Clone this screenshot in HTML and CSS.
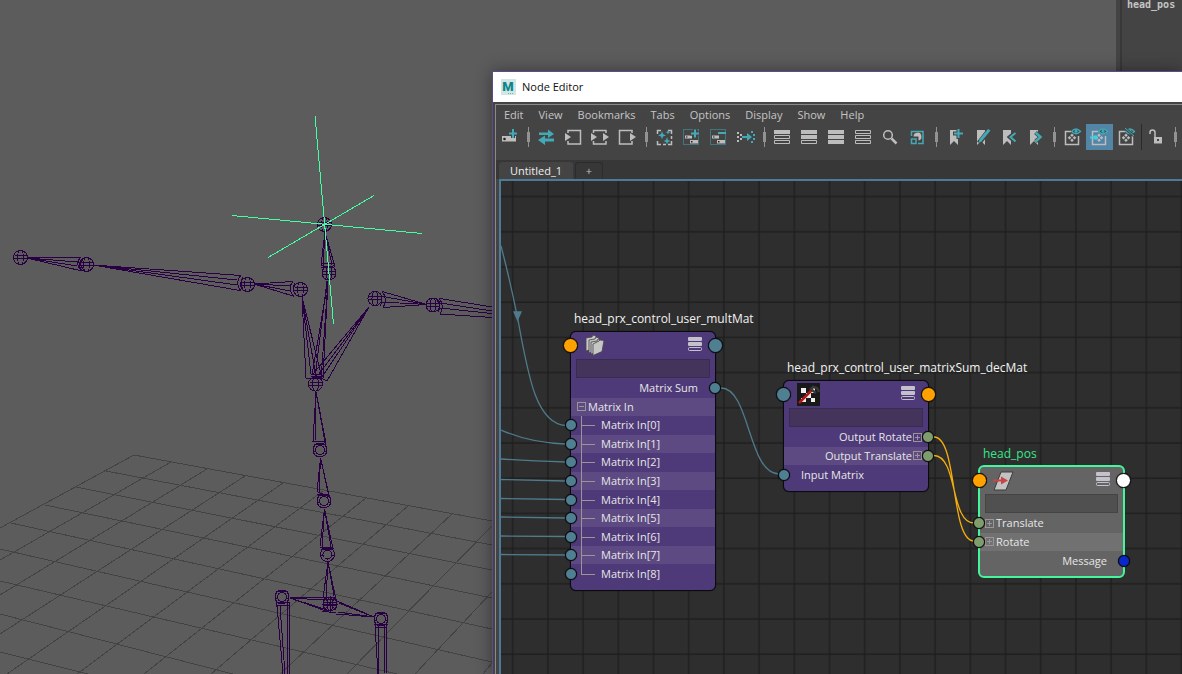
FILE: index.html
```html
<!DOCTYPE html>
<html lang="en">
<head>
<meta charset="utf-8">
<title>Node Editor</title>
<link rel="stylesheet" href="styles.css">
</head>
<body>
<svg width="0" height="0" class="defs" aria-hidden="true">
  <defs>
    <g id="joint" fill="none" stroke="#2a0045">
      <circle r="7"/><ellipse rx="3" ry="7"/><path d="M-7 1H7M-6 -2H6"/>
    </g>
    <g id="knuckle" fill="none" stroke="#2a0045">
      <circle r="7"/><circle r="4.500"/><path d="M-6 -6H6M-7 1H-4M4 1H7"/>
    </g>
    <path id="ribbon" d="M0 0H8V15L4 11L0 15Z" fill="#bdbdbd"/>
    <g id="cells">
      <path d="M12 7.500H6.500V20.500H19.500V12" fill="none" stroke="#bdbdbd" stroke-width="1.500"/>
      <path d="M13 9.500l1.800 1.800-1.800 1.800-1.800-1.800zM13 14.500l1.800 1.800-1.800 1.800-1.800-1.800zM10.500 12l1.800 1.800-1.800 1.800-1.800-1.800zM15.500 12l1.800 1.800-1.800 1.800-1.800-1.800z" fill="#bdbdbd"/>
    </g>
    <g id="eye">
      <path d="M12.500 7.500Q17 2.500 21.500 7.500Q17 12 12.500 7.500Z" fill="#3b4b4e" stroke="#43a9b5" stroke-width="1.300"/><circle cx="17" cy="7.300" r="1.500" fill="#43a9b5"/>
    </g>
    <g id="bars">
      <rect width="14" height="4" rx="1" fill="#c4c0cc"/><rect y="5" width="14" height="4" rx="1" fill="#c4c0cc"/><rect x=".5" y="10.500" width="13" height="3" rx="1" fill="none" stroke="#c4c0cc"/>
    </g>
    <g id="marquee">
      <rect x="5.500" y="5.500" width="15" height="15" fill="none" stroke="#43a9b5" stroke-dasharray="1 1"/>
      <path d="M7 11.500h7v3H7zM12 16h8v3.500h-8z" fill="#bdbdbd"/><path d="M8 12.500h1.500v1H8zM13 17h1.500v1.500H13z" fill="#222"/>
    </g>
  </defs>
</svg>

<main class="desktop">
  <svg class="scene" width="1120" height="674" role="img" aria-label="Perspective view">
    <g class="floor">
      <path d="M134 455L492 521M106 471L492 545M76 487L492 570M45 505L492 598M11 523L492 629M0 549L492 662M0 581L397 674M0 614L233 674M0 652L88 674"/>
      <path d="M134 455L0 528M171 462L0 560M207 469L0 595M245 476L0 634M283 483L7 674M323 491L77 674M366 498L144 674M408 506L211 674M452 514L280 674M492 526L347 674M492 592L415 674M492 663L483 674"/>
    </g>
    <g class="bones">
      <path d="M27 258L81 257.500M27 258L78 262M27 258L77 266M27 258L82 271M81 257Q74 264 82 271M83 259Q78 264 84 270"/>
      <path d="M93 265L241 275.500M93 265L237 280M93 265L237 285M93 265L240 290.500M241 275Q234 283 241 291M243 277Q239 283 243 289"/>
      <path d="M254 284L293 281.500M254 284L291 286M254 284L290 291M254 284L293 296M293 281Q287 289 294 297M295 283Q291 289 296 295"/>
      <path d="M427 304.500L382 291.500M427 304.500L380 296M427 304.500L381 302M427 304.500L383 307.500M382 291Q388 299 383 308M380 293Q384 299 380 306"/>
      <path d="M440 298.500L492 307M440 303L492 311M440 308L492 313.500M440 314L492 317.500M439 298Q445 306 440 314M437 300Q442 306 438 312"/>
      <path d="M325 232L321 265M325 232L323 267M325 232L332 265M325 232L335 267M321 265Q328 270 335 265M322 263H335M321 267H333"/>
      <path d="M328 281L312 375M327 281L315 377M328 281L321 380M328 281L323 378M311 374H322M311 376H323M309 378H322"/>
      <path d="M302 297L306 378M302 297L311 374M302 297L316 376M302 297L322 378M306 378H322"/>
      <path d="M369 307L313 374M369 307L319 374M369 307L322 377M369 307L327 381M313 374L327 381"/>
      <path d="M316 392L313 441M316 392L315 441M316 392L325 442M316 392L326 443M312 441H323L326 444M314 444H325"/>
      <path d="M320.500 458L317 492M320.500 458L319 494M320.500 458L328 492M320.500 458L329 495M317 494H329M318 492L329 497"/>
      <path d="M324.500 509L320 546M324.500 509L322 547M324.500 509L331 547M324.500 509L333 549M320 547H333M321 549H331"/>
      <path d="M328 562L323 598M328 562L326 598M328 562L334 596M328 562L336 600M323 597H335M324 599H337"/>
      <path d="M290 597L324 597M290 598L324 600M290 598L324 609M290 598L326 611M374 617L337 601M374 617L339 603M374 617L338 612M374 617L336 614M322 611L336 613"/>
      <path d="M277 606L283 674M280 606L285 674M287 602L287 674M289 602L289 674M276 602H289M277 605H289M276 601V607"/>
      <path d="M375 625L378 674M378 624L379 674M385 625L384 674M387 624L386 674M374 624H388M375 627H387"/>
      <path d="M324 598L336 610M336 598L324 610M322 604H338M330 596V613"/>
    </g>
    <g>
      <use href="#joint" x="20.500" y="257.500"/><use href="#joint" x="86.500" y="264.500"/><use href="#joint" x="247.500" y="284.500"/><use href="#joint" x="300.500" y="289.500"/>
      <use href="#joint" x="375" y="298.500"/><use href="#joint" x="433" y="305"/><use href="#joint" x="324.500" y="224.500"/><use href="#joint" x="329" y="273"/>
      <use href="#joint" x="315.500" y="384"/><use href="#knuckle" x="320" y="450"/><use href="#knuckle" x="324" y="501"/><use href="#knuckle" x="327.500" y="554.500"/>
      <use href="#joint" x="330" y="604"/><use href="#knuckle" x="282" y="597"/><use href="#knuckle" x="381" y="619"/>
    </g>
    <path class="locator" d="M315 116L333.500 324M232 215.500L422 233.500M268 257.500L374 195.500"/>
  </svg>

  <aside class="outliner"><span>head_pos</span></aside>

  <section class="window">
    <header class="titlebar">
      <svg width="15" height="16" viewBox="0 0 15 16"><rect width="15" height="16" fill="#d2e6e6"/><text x="7" y="12" text-anchor="middle" class="logo">M</text><path d="M7 14.500h6" stroke="#6db6b8" stroke-dasharray="1 1"/></svg>
      <h1>Node Editor</h1>
    </header>
    <div class="body">
      <nav class="menu">
        <button>Edit</button><button>View</button><button>Bookmarks</button><button>Tabs</button><button>Options</button><button>Display</button><button>Show</button><button>Help</button>
      </nav>
      <div class="toolbar">
        <button aria-label="Create node"><svg viewBox="0 0 27 26"><path d="M6 12h14v5.500H6z" fill="#bdbdbd"/><circle cx="8.500" cy="15" r="1.300" fill="#222"/><path d="M12 9.500h10M17 5v9" stroke="#444" stroke-width="4"/><path d="M13 9.500h8M17 5v9" stroke="#43a9b5" stroke-width="2"/></svg></button>
        <i class="sep"></i>
        <button aria-label="Input and output connections"><svg viewBox="0 0 27 26"><path d="M6 8.500h9V5.500l6 4.500-6 4v-3H6zM21 14.500h-9v-3l-7 4.500 7 5v-3.500h9z" fill="#43a9b5"/></svg></button>
        <button aria-label="Input connections"><svg viewBox="0 0 27 26"><path d="M8 9V6.500H20.500V20H8V17" class="ln"/><path d="M5 9l6 4-6 4z" class="gy"/></svg></button>
        <button aria-label="Both connections"><svg viewBox="0 0 27 26"><path d="M6.500 9V6.500H19V9M6.500 17V20H19V17" class="ln"/><path d="M4 9l6 4-6 4zM16 9l6 4-6 4z" class="gy"/></svg></button>
        <button aria-label="Output connections"><svg viewBox="0 0 27 26"><path d="M18 9V6.500H5.500V20H18V17" class="ln"/><path d="M16 9l6 4-6 4z" class="gy"/></svg></button>
        <i class="sep"></i>
        <button aria-label="Rearrange graph"><svg viewBox="0 0 27 26"><path d="M6.500 10V6.500H10M17 6.500H20.500V10M20.500 17V20.500H17M10 20.500H6.500V17M12 20.500h3M20.500 12v3" class="ln"/><path d="M11 7l1 3 3 1.500-3 1-1 3-1-3-3-1 3-1.500zM16 13l1 3 2.500 1-2.500 1-1 2.500-1-2.500-2.500-1 2.500-1zM17 6l.7 1.500 1.500.7-1.500.7-.7 1.500-.7-1.500-1.500-.7 1.500-.7z" fill="#43a9b5"/></svg></button>
        <button aria-label="Add selected"><svg viewBox="0 0 27 26"><use href="#marquee"/><path d="M12 9.500h9M17 5v10" stroke="#444" stroke-width="4"/><path d="M13 9.500h8M17 5.500v8" stroke="#43a9b5" stroke-width="2"/></svg></button>
        <button aria-label="Remove selected"><svg viewBox="0 0 27 26"><use href="#marquee"/><path d="M13 9h8" stroke="#43a9b5" stroke-width="2"/></svg></button>
        <button aria-label="Pin nodes"><svg viewBox="0 0 27 26"><path d="M5 8h2v2H5zM5 12h2v2H5zM5 16h2v2H5zM8 10h2v2H8zM8 14h2v2H8z" fill="#bdbdbd"/><path d="M10 12h5V9l5 4-5 4v-3h-5zM19 7h2v2h-2zM19 17h2v2h-2zM21 10h2v2h-2zM21 14h2v2h-2z" fill="#43a9b5"/></svg></button>
        <i class="sep"></i>
        <button aria-label="Simple mode"><svg viewBox="0 0 27 26"><path d="M5 6h16v4H5z" class="gy"/><path d="M5.500 11.500h15v3h-15zM5.500 16.500h15v3h-15z" class="th"/></svg></button>
        <button aria-label="Connected mode"><svg viewBox="0 0 27 26"><path d="M5 6h16v4H5zM5 11h16v4H5z" class="gy"/><path d="M5.500 16.500h15v3h-15z" class="th"/></svg></button>
        <button aria-label="Full mode"><svg viewBox="0 0 27 26"><path d="M5 6h16v4H5zM5 11h16v4H5zM5 16h16v4H5z" class="gy"/></svg></button>
        <button aria-label="Custom mode"><svg viewBox="0 0 27 26"><path d="M5.500 6.500h15v3h-15zM5.500 11.500h15v3h-15zM5.500 16.500h15v3h-15z" class="th"/></svg></button>
        <button aria-label="Search"><svg viewBox="0 0 27 26"><circle cx="11" cy="11" r="4.300" class="ln"/><path d="M14.500 14.500l5 5" stroke="#bdbdbd" stroke-width="2.500"/></svg></button>
        <button aria-label="Swatch size"><svg viewBox="0 0 27 26"><path d="M7.500 12V7.500H19V19.500H14" fill="none" stroke="#43a9b5" stroke-width="1.500"/><path d="M7.500 15h4.500v4.500H7.500z" fill="none" stroke="#43a9b5" stroke-width="1.500"/><path d="M9.500 12.500a4 4 0 1 1 5 4v-4z" fill="#bdbdbd"/></svg></button>
        <i class="sep"></i>
        <button aria-label="Add bookmark"><svg viewBox="0 0 27 26"><use href="#ribbon" x="9" y="6"/><path d="M12 9.500h10M17.500 4v11" stroke="#444" stroke-width="4"/><path d="M13 9.500h9M17.500 5v9" stroke="#43a9b5" stroke-width="2"/></svg></button>
        <button aria-label="Edit bookmark"><svg viewBox="0 0 27 26"><use href="#ribbon" x="9" y="6"/><path d="M11 19l11-14" stroke="#444" stroke-width="5"/><path d="M10.500 19l1-4 8.500-10 2.500 1.500-9 11z" fill="#43a9b5"/></svg></button>
        <button aria-label="Previous bookmark"><svg viewBox="0 0 27 26"><use href="#ribbon" x="8" y="6"/><path d="M20.500 9l-5 4 5 4.500" fill="none" stroke="#444" stroke-width="5"/><path d="M20.500 9l-5 4 5 4.500" fill="none" stroke="#43a9b5" stroke-width="2"/></svg></button>
        <button aria-label="Next bookmark"><svg viewBox="0 0 27 26"><use href="#ribbon" x="8" y="6"/><path d="M13.500 8.500l5 4.500-5 4.500" fill="none" stroke="#444" stroke-width="4"/><path d="M13.500 8.500l5 4.500-5 4.500" fill="none" stroke="#43a9b5" stroke-width="2.500"/></svg></button>
        <i class="sep"></i>
        <button aria-label="Show all"><svg viewBox="0 0 27 26"><use href="#cells"/><use href="#eye"/></svg></button>
        <button class="on" aria-label="Show connected"><svg viewBox="0 0 27 26"><use href="#cells"/><use href="#eye"/><path d="M4 13.500h5" stroke="#43d0dc" stroke-width="2"/><circle cx="9.500" cy="13.500" r="2.300" fill="#43d0dc"/></svg></button>
        <button aria-label="Hide"><svg viewBox="0 0 27 26"><use href="#cells"/><use href="#eye"/><path d="M12 4l9 8" stroke="#444" stroke-width="2.500"/><path d="M12 4l9 8" stroke="#43a9b5"/></svg></button>
        <i class="rule"></i>
        <button aria-label="Unlock"><svg viewBox="0 0 27 26"><path d="M11 13h8v6.500h-8z" class="gy"/><path d="M7 10V8.500a2.500 2.500 0 0 1 5 0V13" class="ln"/><path d="M14 15h2v2h-2z" fill="#444"/></svg></button>
        <i class="sep"></i>
      </div>
      <div class="tabs"><button class="tab active">Untitled_1</button><button class="tab">+</button></div>

      <div class="canvas">
        <svg class="wires" width="100%" height="100%">
          <defs><pattern id="grid" width="35.200" height="35.200" patternUnits="userSpaceOnUse" x="10.700" y="14.500"><path d="M1 0V35.200M0 1H35.200" stroke="#1c1c1c" stroke-width="1.200"/></pattern></defs>
          <rect width="100%" height="100%" fill="url(#grid)"/>
          <g transform="translate(-501 -181)" fill="none" stroke="#4f7b8b" stroke-width="1.300">
            <path d="M501 246C510 280 514 300 518 320C528 375 536 424 566 425.500M501 430Q530 443 566 444M501 459Q530 461 566 462M501 479.500L566 481M501 498.500L566 499.500M501 517L566 518M501 536L566 536.500M501 554.500L566 555"/>
            <path d="M514 312H521L517.500 320Z" fill="#4f7b8b"/>
            <path d="M721 388C750 388 748 474 779 474"/>
            <path d="M934 437C958 437 950 541 974 541M934 455.500C958 456 950 523 974 523" stroke="#f5ad0c"/>
          </g>
        </svg>

        <article class="node mult">
          <h2>head_prx_control_user_multMat</h2>
          <div class="head">
            <b class="pin big in orange"></b><b class="pin big out teal"></b>
            <svg class="icon" width="24" height="24"><g fill="#c6c6c6" stroke="#444" stroke-width=".8"><path d="M3 5l6-1 1-2 3 1v12L3 18z"/><path d="M6 7l6-1 1-2 3 1v12L6 20z"/><path d="M8 9l6-1 1-2 3 1v12L8 21z"/><path d="M10 11l6-3 1-1 4 .5-2 11-9 4z"/></g></svg>
            <svg class="mode" width="14" height="14"><use href="#bars"/></svg>
          </div>
          <input class="field" aria-label="Filter attributes of multMat">
          <div class="rows">
            <div class="row end">Matrix Sum<b class="pin out teal"></b></div>
            <div class="row group"><i class="box minus"></i>Matrix In</div>
            <div class="row leaf">Matrix In[0]<b class="pin in teal"></b></div>
            <div class="row leaf">Matrix In[1]<b class="pin in teal"></b></div>
            <div class="row leaf">Matrix In[2]<b class="pin in teal"></b></div>
            <div class="row leaf">Matrix In[3]<b class="pin in teal"></b></div>
            <div class="row leaf">Matrix In[4]<b class="pin in teal"></b></div>
            <div class="row leaf">Matrix In[5]<b class="pin in teal"></b></div>
            <div class="row leaf">Matrix In[6]<b class="pin in teal"></b></div>
            <div class="row leaf">Matrix In[7]<b class="pin in teal"></b></div>
            <div class="row leaf">Matrix In[8]<b class="pin in teal"></b></div>
          </div>
        </article>

        <article class="node dec">
          <h2>head_prx_control_user_matrixSum_decMat</h2>
          <div class="head">
            <b class="pin big in teal"></b><b class="pin big out orange"></b>
            <svg class="icon" width="24" height="24"><rect x="1" y="1" width="23" height="23" fill="#191919"/><path d="M5 6h5v5H5zM15 6h4v5h-4zM10 11h5v5h-5zM5 16h5v4H5zM15 16h4v4h-4z" fill="#eee"/><path d="M3 21L16 8" stroke="#b51616" stroke-width="2.500"/><path d="M14 8l3-3 4 1 2 4M16 8l4 3" fill="none" stroke="#383838" stroke-width="2.500"/></svg>
            <svg class="mode" width="14" height="14"><use href="#bars"/></svg>
          </div>
          <input class="field" aria-label="Filter attributes of decMat">
          <div class="rows">
            <div class="row expand">Output Rotate<i class="box plus"></i><b class="pin out green"></b></div>
            <div class="row expand">Output Translate<i class="box plus"></i><b class="pin out green"></b></div>
            <div class="row plain">Input Matrix<b class="pin in teal"></b></div>
          </div>
        </article>

        <article class="node pos">
          <h2>head_pos</h2>
          <div class="head">
            <b class="pin big in orange"></b><b class="pin big out white"></b>
            <svg class="icon" width="24" height="24"><path d="M9 4H21L14 22H2Z" fill="#c2c2c2" stroke="#3c3c3c"/><path d="M1 11.500h8V8.500l7 4-7 4V13.500H1z" fill="#c94444"/></svg>
            <svg class="mode" width="14" height="14"><use href="#bars"/></svg>
          </div>
          <input class="field" aria-label="Filter attributes of head_pos">
          <div class="rows">
            <div class="row group"><i class="box plus"></i>Translate<b class="pin in green"></b></div>
            <div class="row group"><i class="box plus"></i>Rotate<b class="pin in green"></b></div>
            <div class="row end">Message<b class="pin out blue"></b></div>
          </div>
        </article>
      </div>
    </div>
  </section>
</main>
</body>
</html>
```
FILE: styles.css
```css
* { box-sizing: border-box; }
body {
  margin: 0;
  background: #5c5c5c;
  font: 11px/18px "Open Sans", "Noto Sans", sans-serif;
  color: #e6e6e6;
}
h1, h2 { margin: 0; font-weight: 400; }
button { padding: 0; border: 0; background: none; color: inherit; font: inherit; }
.defs { position: absolute; }

.desktop { position: relative; min-height: 100vh; overflow: hidden; }
.scene { position: absolute; left: 0; top: 0; shape-rendering: crispEdges; }
.floor { fill: none; stroke: #434343; }
.bones { fill: none; stroke: #2a0045; }
.locator { fill: none; stroke: #43ffa4; }

.outliner {
  position: absolute;
  top: 0; right: 0; bottom: 0; left: 1116px;
  padding-left: 11px;
  background: linear-gradient(to right, #444 4px, #383838 4px, #383838 6px, #444 6px);
  font: bold 10px/10px "DejaVu Sans Mono", monospace;
  color: #c4c4c4;
}

.window {
  position: absolute;
  top: 71px; right: 0; bottom: 0; left: 492px;
  display: flex;
  flex-direction: column;
  border: solid #5c4a8c;
  border-width: 1px 0 0 1px;
  background: #444;
  box-shadow: 0 0 16px rgba(0, 0, 0, .4);
}
.titlebar { display: flex; align-items: center; gap: 6px; height: 30px; padding-left: 8px; background: #fff; color: #111; }
.titlebar h1 { font-size: 11px; line-height: 18px; }
.logo { font: 900 13px "Roboto", sans-serif; fill: #0c8488; }

.body {
  flex: 1;
  display: flex;
  flex-direction: column;
  margin: 2px 0 0 2px;
  border: solid #8a8a8a;
  border-width: 1px 0 0 1px;
}
.menu { display: flex; gap: 15px; height: 19px; padding-left: 8px; color: #c4c4c4; }
.toolbar { display: flex; height: 36px; padding-bottom: 10px; }
.toolbar button { flex: none; width: 27px; }
.toolbar svg { display: block; width: 27px; height: 26px; }
.toolbar .on { background: #5285a6; }
.ln { fill: none; stroke: #bdbdbd; stroke-width: 1.5; }
.th { fill: none; stroke: #bdbdbd; }
.gy { fill: #bdbdbd; }
.sep {
  flex: none;
  width: 10px;
  background:
    linear-gradient(#929292, #929292) center / 3px 10px no-repeat,
    linear-gradient(#929292, #929292) center / 1px 20px no-repeat;
}
.rule { flex: none; width: 3px; background: linear-gradient(to right, transparent 1px, #292929 1px, #292929 2px, transparent 2px); }

.tabs { display: flex; align-items: flex-end; gap: 2px; height: 19px; padding-left: 3px; background: #373737; }
.tab { width: 28px; height: 17px; border: 1px solid #2c2c2c; border-bottom: 0; border-radius: 3px 3px 0 0; line-height: 16px; color: #c4c4c4; }
.tab.active { width: 74px; border-color: #444; background: #444; color: #eee; }

.canvas {
  flex: 1;
  position: relative;
  overflow: hidden;
  margin-left: 3px;
  border: solid #4e7a98;
  border-width: 2px 0 0 2px;
  background: #2e2e2e;
}
.wires { position: absolute; inset: 0; }

.node {
  position: absolute;
  width: 146px;
  padding-bottom: 7px;
  border: 1px solid #0b0a10;
  border-radius: 6px;
  background: #4e3a78;
  box-shadow: 0 0 1px #000;
}
.node h2 { position: absolute; left: 3px; bottom: 100%; margin-bottom: 4px; white-space: nowrap; font-size: 12px; line-height: 18px; color: #f2f2f2; }
.mult { left: 69px; top: 150px; }
.dec { left: 282px; top: 199px; }
.pos { left: 477px; top: 284px; width: 147px; padding-bottom: 6px; border: 2px solid #43f79c; background: #646464; box-shadow: none; }
.pos h2 { color: #35e889; }
.head { position: relative; display: flex; justify-content: space-between; height: 27px; padding: 1px 13px 0 12px; }
.mode { margin-top: 4px; }
.field {
  display: block;
  width: calc(100% - 10px);
  height: 19px;
  margin: 0 5px 1px;
  padding: 0 4px;
  border: 1px solid #392c52;
  background: #44345c;
  color: inherit;
  font: inherit;
}
.pos .field { border-color: #444; background: #505050; }
.rows { display: grid; grid-auto-rows: 1fr; height: 204px; }
.dec .rows, .pos .rows { height: 56px; }
.row { position: relative; display: flex; align-items: center; line-height: 18px; }
.row:nth-child(even) { background: #5d4a82; }
.pos .row:nth-child(even) { background: #717171; }
.end { justify-content: flex-end; padding-right: 17px; }
.group { gap: 2px; padding-left: 6px; }
.plain { padding-left: 17px; }
.expand { justify-content: flex-end; gap: 1px; padding-right: 6px; }
.leaf { padding-left: 30px; }
.leaf::before, .leaf::after { content: ""; position: absolute; left: 10px; background: #9b9597; }
.leaf::before { top: 0; bottom: 0; width: 1px; }
.leaf::after { top: 50%; width: 14px; height: 1px; }
.leaf:last-child::before { bottom: 50%; }
.box {
  flex: none;
  width: 9px;
  height: 9px;
  border: 1px solid #9b9597;
  background: linear-gradient(#9b9597, #9b9597) center / 5px 1px no-repeat;
}
.plus {
  background:
    linear-gradient(#9b9597, #9b9597) center / 5px 1px no-repeat,
    linear-gradient(#9b9597, #9b9597) center / 1px 5px no-repeat;
}
.pos .group { padding-left: 5px; }
.pos .end { padding-right: 16px; }

.pin { position: absolute; top: 50%; width: 12px; height: 12px; margin-top: -6px; border: 1px solid #08080c; border-radius: 50%; box-shadow: 0 0 1px #000; }
.pin.in { left: -6px; }
.pin.out { right: -6px; }
.pin.big { width: 15px; height: 15px; margin-top: -8px; }
.pin.big.in { left: -8px; }
.pin.big.out { right: -8px; }
.pos .pin.in { left: -7px; }
.pos .pin.out { right: -7px; }
.pos .pin.big.in { left: -8px; }
.pos .pin.big.out { right: -8px; }
.teal { background: #4f7f90; }
.orange { background: #ffa200; }
.green { background: #7e9c6c; }
.white { background: #fff; }
.blue { background: #0a28c8; }
```
